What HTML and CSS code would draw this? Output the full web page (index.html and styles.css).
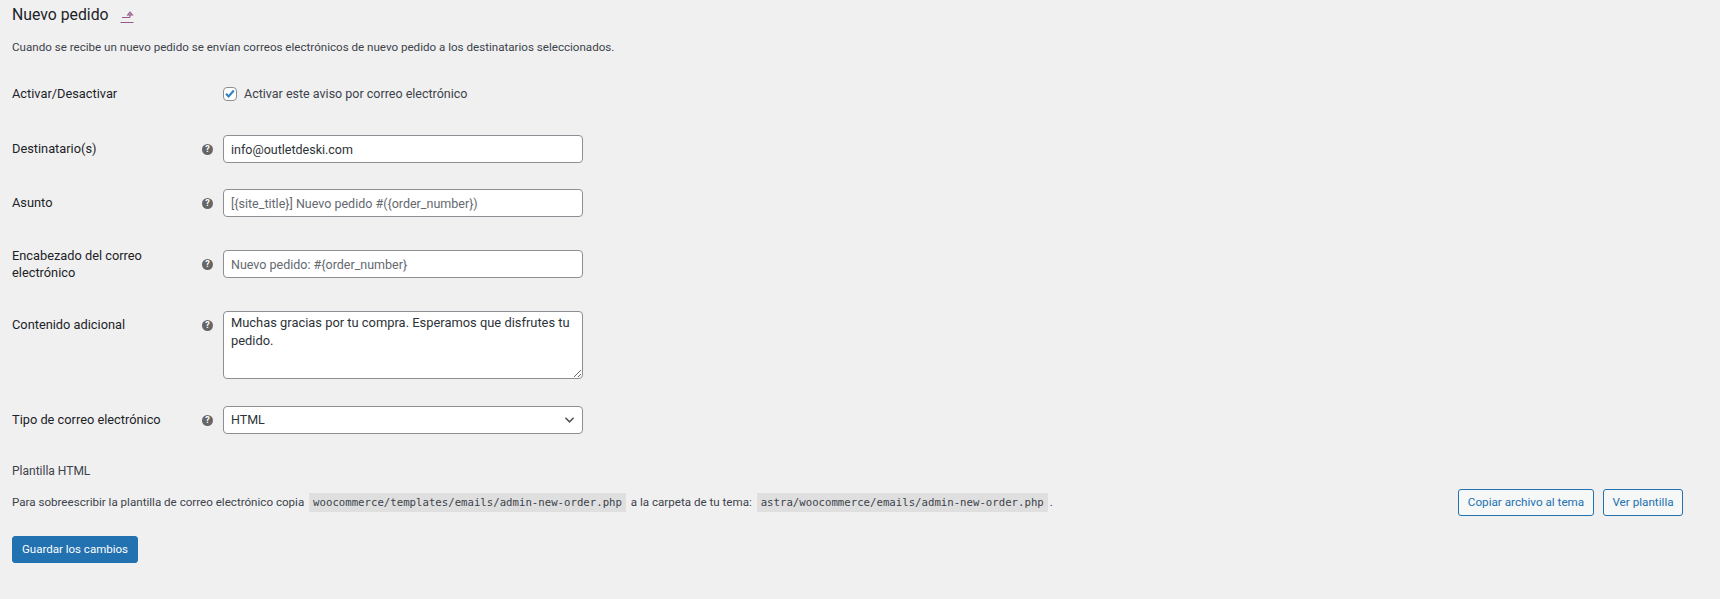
FILE: index.html
```html
<!DOCTYPE html>
<html lang="es">
<head>
    <meta charset="UTF-8">
    <title>Nuevo pedido</title>
    <link rel="stylesheet" href="styles.css">
</head>
<body>
    <form class="wrap">
        <h2 class="title">Nuevo pedido
            <a href="#" class="back-link">
                <svg width="14" height="14" viewBox="0 0 14 14"><path d="M2 8.500h8M10 8.500V4.500M7.500 6L10 3l2.500 3z" fill="none" stroke="#96588a" stroke-width="1.100"/><path d="M0.500 13.500h13" fill="none" stroke="#96588a" stroke-width="1"/></svg>
            </a>
        </h2>
        <p class="intro">Cuando se recibe un nuevo pedido se envían correos electrónicos de nuevo pedido a los destinatarios seleccionados.</p>

        <div class="fields">
            <div class="row row-check">
                <label class="row-label">Activar/Desactivar</label>
                <span></span>
                <label class="check"><input type="checkbox" checked> Activar este aviso por correo electrónico</label>
            </div>
            <div class="row">
                <label class="row-label" for="recipient">Destinatario(s)</label>
                <span class="tip">?</span>
                <input class="field" id="recipient" type="text" value="info@outletdeski.com">
            </div>
            <div class="row">
                <label class="row-label" for="subject">Asunto</label>
                <span class="tip">?</span>
                <input class="field" id="subject" type="text" placeholder="[{site_title}] Nuevo pedido #({order_number})">
            </div>
            <div class="row row-tall">
                <label class="row-label" for="heading">Encabezado del correo electrónico</label>
                <span class="tip">?</span>
                <input class="field" id="heading" type="text" placeholder="Nuevo pedido: #{order_number}">
            </div>
            <div class="row row-top">
                <label class="row-label" for="extra">Contenido adicional</label>
                <span class="tip">?</span>
                <textarea class="field area" id="extra">Muchas gracias por tu compra. Esperamos que disfrutes tu pedido.</textarea>
            </div>
            <div class="row">
                <label class="row-label" for="type">Tipo de correo electrónico</label>
                <span class="tip">?</span>
                <select class="field pick" id="type"><option>HTML</option></select>
            </div>
        </div>

        <h3 class="sub-title">Plantilla HTML</h3>
        <div class="template">
            <p>Para sobreescribir la plantilla de correo electrónico copia <code>woocommerce/templates/emails/admin-new-order.php</code> a la carpeta de tu tema: <code>astra/woocommerce/emails/admin-new-order.php</code>.</p>
            <div class="template-btns">
                <a href="#" class="btn btn-copy">Copiar archivo al tema</a>
                <a href="#" class="btn btn-view">Ver plantilla</a>
            </div>
        </div>

        <button type="button" class="btn-primary">Guardar los cambios</button>
    </form>
</body>
</html>
```

FILE: styles.css
```css
* {
    box-sizing: border-box;
}

html, body {
    margin: 0;
    padding: 0;
}

body {
    background: #f0f0f1;
    color: #3c434a;
    font-family: Roboto, "Open Sans", sans-serif;
    font-size: 13px;
    line-height: 1.4;
}

.wrap {
    padding: 0 37px 0 12px;
}

.title {
    display: flex;
    align-items: center;
    gap: 11px;
    height: 28px;
    margin: 1px 0 0;
    color: #1d2327;
    font-size: 15.800px;
    font-weight: 450;
}

.back-link {
    display: flex;
    margin-top: 2px;
}

.intro {
    margin: 9px 0 0;
    font-size: 11.600px;
    line-height: 18px;
}

.fields {
    margin-top: 24px;
}

.row {
    display: grid;
    grid-template-columns: 189px 22px 360px;
    align-items: center;
    margin-bottom: 26px;
}

.row-check {
    height: 28px;
    margin-bottom: 27px;
}

.row-tall {
    margin-top: 30px;
    margin-bottom: 30px;
}

.row-tall .row-label {
    padding-bottom: 0;
}

.row-top {
    align-items: start;
    margin-bottom: 27px;
}

.row-top .row-label {
    margin-top: 5px;
}

.row-top .tip {
    margin-top: 9px;
}

.row-label {
    padding-bottom: 2px;
    color: #1d2327;
    font-size: 12.800px;
    font-weight: 450;
    line-height: 17px;
}

.check {
    display: flex;
    align-items: center;
    gap: 7px;
    font-size: 12.500px;
}

.check input {
    appearance: none;
    width: 14px;
    height: 14px;
    margin: 0;
    border: 1px solid #8c8f94;
    border-radius: 4px;
    background: #fff url("data:image/svg+xml,%3Csvg xmlns='http://www.w3.org/2000/svg' viewBox='0 0 14 14'%3E%3Cpath d='M2.400 6.600l3 3.200L11.400 3' fill='none' stroke='%233582c4' stroke-width='2.600'/%3E%3C/svg%3E") center no-repeat;
}

.tip {
    width: 11px;
    height: 11px;
    margin-left: 1px;
    border-radius: 50%;
    background: #666;
    color: #fff;
    font-size: 9px;
    font-weight: 700;
    line-height: 11px;
    text-align: center;
}

.field {
    display: block;
    width: 360px;
    height: 28px;
    margin: 0;
    padding: 0 7px;
    border: 1px solid #8c8f94;
    border-radius: 4px;
    background: #fff;
    color: #2c3338;
    font: inherit;
    font-size: 12.500px;
}

.field::placeholder {
    color: #646970;
    opacity: 1;
}

.area {
    height: 68px;
    padding: 2px 7px;
    font-size: 12.900px;
    line-height: 18px;
    resize: vertical;
}

.pick {
    appearance: none;
    background: #fff url("data:image/svg+xml,%3Csvg xmlns='http://www.w3.org/2000/svg' viewBox='0 0 12 8'%3E%3Cpath d='M1.500 1.500L6 6l4.500-4.500' fill='none' stroke='%23555' stroke-width='1.700'/%3E%3C/svg%3E") right 7px center / 11px 8px no-repeat;
}

.sub-title {
    margin: 29px 0 0;
    color: #3c434a;
    font-size: 12px;
    font-weight: 450;
    line-height: 16px;
}

.template {
    display: flex;
    align-items: center;
    justify-content: space-between;
    margin-top: 10px;
    font-size: 11.600px;
}

.template p {
    margin: 0;
}

code {
    margin: 0 2px;
    padding: 3px 4px;
    background: rgba(0, 0, 0, 0.07);
    color: #3c434a;
    font-family: "DejaVu Sans Mono", monospace;
    font-size: 10.700px;
}

.template-btns {
    display: flex;
    gap: 9px;
}

.btn {
    display: block;
    height: 27px;
    border: 1px solid #2271b1;
    border-radius: 3px;
    background: #f6f7f7;
    color: #2271b1;
    font-size: 11.700px;
    line-height: 25px;
    text-align: center;
    text-decoration: none;
}

.btn-copy {
    width: 136px;
}

.btn-view {
    width: 80px;
}

.btn-primary {
    display: block;
    width: 126px;
    height: 27px;
    margin-top: 20px;
    padding: 0;
    border: 1px solid #2271b1;
    border-radius: 3px;
    background: #2271b1;
    color: #fff;
    font: inherit;
    font-size: 11.500px;
}
```
